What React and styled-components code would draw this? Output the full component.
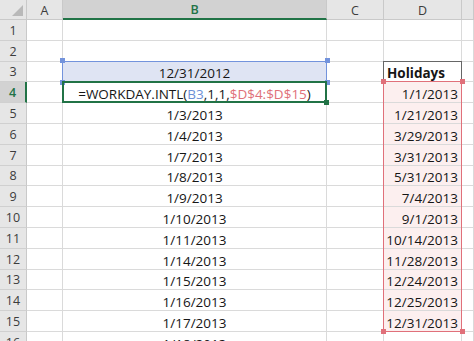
import React from "react";
import styled, { createGlobalStyle } from "styled-components";

const Global = createGlobalStyle`
  html, body { margin: 0; padding: 0; background: #ffffff; overflow: hidden; }
  body { font-family: "Open Sans", "Liberation Sans", sans-serif; }
`;

const ROW_H = 20.8;

const Sheet = styled.div`
  display: grid;
  grid-template-columns: 27px 36px 264px 57px 78px 12px;
  grid-template-rows: 20px repeat(16, ${ROW_H}px);
  width: 474px;
  height: 341px;
  overflow: hidden;
  color: #161616;
`;

const Corner = styled.div`
  grid-column: 1;
  grid-row: 1;
  background: #e6e6e6;
  border-right: 1px solid #c9c9c9;
  border-bottom: 1px solid #c9c9c9;
  box-sizing: border-box;
  display: flex;
  align-items: flex-end;
  justify-content: flex-end;
  padding: 0 3px 3px 0;
`;

const ColHeader = styled.div`
  grid-column: ${(p) => p.$col};
  grid-row: 1;
  box-sizing: border-box;
  background: ${(p) => (p.$active ? "#d2d2d2" : "#e6e6e6")};
  color: ${(p) => (p.$active ? "#217346" : "#3c3c3c")};
  border-right: 1px solid #c9c9c9;
  border-bottom: ${(p) => (p.$active ? "2px solid #217346" : "1px solid #c9c9c9")};
  font-size: 12.5px;
  font-weight: ${(p) => (p.$active ? 600 : 400)};
  display: flex;
  align-items: center;
  justify-content: center;
  padding-top: 1px;
`;

const RowHeader = styled.div`
  grid-column: 1;
  grid-row: ${(p) => p.$row};
  box-sizing: border-box;
  background: ${(p) => (p.$active ? "#d2d2d2" : "#e6e6e6")};
  color: ${(p) => (p.$active ? "#217346" : "#3c3c3c")};
  border-right: ${(p) => (p.$active ? "2px solid #217346" : "1px solid #c9c9c9")};
  border-bottom: 1px solid #d0d0d0;
  font-size: 12.5px;
  font-weight: ${(p) => (p.$active ? 600 : 400)};
  display: flex;
  align-items: center;
  justify-content: center;
  padding-top: 1px;
`;

const Cell = styled.div`
  grid-column: ${(p) => p.$col};
  grid-row: ${(p) => p.$row};
  box-sizing: border-box;
  background: ${(p) => p.$fill || "#ffffff"};
  border-right: 1px solid #dadada;
  border-bottom: 1px solid #dadada;
  font-size: 13.5px;
  line-height: 16px;
  font-weight: ${(p) => (p.$bold ? 700 : 400)};
  display: flex;
  align-items: flex-end;
  justify-content: ${(p) =>
    p.$align === "left" ? "flex-start" : p.$align === "right" ? "flex-end" : "center"};
  padding: 0 3px 0 3px;
  white-space: nowrap;
  overflow: visible;
`;

const Ref = styled.span`
  color: ${(p) => p.$color};
`;

const RangeBox = styled.div`
  grid-column: ${(p) => p.$cols};
  grid-row: ${(p) => p.$rows};
  margin: -1px 0 0 -1px;
  border: ${(p) => p.$w}px solid ${(p) => p.$color};
  position: relative;
  pointer-events: none;
  z-index: ${(p) => p.$z || 2};
`;

const Handle = styled.span`
  position: absolute;
  width: 5px;
  height: 5px;
  background: ${(p) => p.$color};
  ${(p) => (p.$top ? "top: -3.5px;" : "bottom: -3.5px;")}
  ${(p) => (p.$left ? "left: -3.5px;" : "right: -3.5px;")}
`;

const Blank = ({ col, row }) => <Cell $col={col} $row={row} />;

const bDates = [
  "1/3/2013", "1/4/2013", "1/7/2013", "1/8/2013", "1/9/2013", "1/10/2013",
  "1/11/2013", "1/14/2013", "1/15/2013", "1/16/2013", "1/17/2013", "1/18/2013",
];
const holidays = [
  "1/1/2013", "1/21/2013", "3/29/2013", "3/31/2013", "5/31/2013", "7/4/2013",
  "9/1/2013", "10/14/2013", "11/28/2013", "12/24/2013", "12/25/2013", "12/31/2013",
];

export default function App() {
  const cells = [];
  for (let r = 1; r <= 16; r++) {
    const gr = r + 1;
    cells.push(
      <RowHeader key={`h${r}`} $row={gr} $active={r === 4}>
        {r}
      </RowHeader>
    );
    cells.push(<Blank key={`a${r}`} col={2} row={gr} />);
    if (r === 3) {
      cells.push(
        <Cell key={`b${r}`} $col={3} $row={gr} $fill="#dfe4f3">
          12/31/2012
        </Cell>
      );
    } else if (r === 4) {
      cells.push(
        <Cell key={`b${r}`} $col={3} $row={gr}>
          =WORKDAY.INTL(<Ref $color="#6d8fd6">B3</Ref>,1,1,
          <Ref $color="#e0707a">$D$4:$D$15</Ref>)
        </Cell>
      );
    } else if (r >= 5) {
      cells.push(
        <Cell key={`b${r}`} $col={3} $row={gr}>
          {bDates[r - 5]}
        </Cell>
      );
    } else {
      cells.push(<Blank key={`b${r}`} col={3} row={gr} />);
    }
    cells.push(<Blank key={`c${r}`} col={4} row={gr} />);
    if (r === 3) {
      cells.push(
        <Cell key={`d${r}`} $col={5} $row={gr} $align="left" $bold>
          Holidays
        </Cell>
      );
    } else if (r >= 4 && r <= 15) {
      cells.push(
        <Cell key={`d${r}`} $col={5} $row={gr} $align="right" $fill="#fcefef">
          {holidays[r - 4]}
        </Cell>
      );
    } else {
      cells.push(<Blank key={`d${r}`} col={5} row={gr} />);
    }
    cells.push(<Blank key={`e${r}`} col={6} row={gr} />);
  }

  return (
    <>
      <Global />
      <Sheet>
        <Corner>
          <svg width="11" height="11" viewBox="0 0 11 11">
            <polygon points="11,0 11,11 0,11" fill="#b9b9b9" />
          </svg>
        </Corner>
        <ColHeader $col={2}>A</ColHeader>
        <ColHeader $col={3} $active>B</ColHeader>
        <ColHeader $col={4}>C</ColHeader>
        <ColHeader $col={5}>D</ColHeader>
        <ColHeader $col={6}></ColHeader>
        {cells}

        <RangeBox $cols="5" $rows="4" $w={1} $color="#666666" $z={2} />
        <RangeBox $cols="3" $rows="4" $w={1.5} $color="#7393dc" $z={3}>
          <Handle $color="#7393dc" $top $left />
          <Handle $color="#7393dc" $top />
          <Handle $color="#7393dc" $left />
          <Handle $color="#7393dc" />
        </RangeBox>
        <RangeBox $cols="3" $rows="5" $w={2} $color="#217346" $z={4}>
          <Handle $color="#217346" />
        </RangeBox>
        <RangeBox $cols="5" $rows="5 / 17" $w={1.5} $color="#e0707a" $z={3}>
          <Handle $color="#e0707a" $top $left />
          <Handle $color="#e0707a" $top />
          <Handle $color="#e0707a" $left />
          <Handle $color="#e0707a" />
        </RangeBox>
      </Sheet>
    </>
  );
}
